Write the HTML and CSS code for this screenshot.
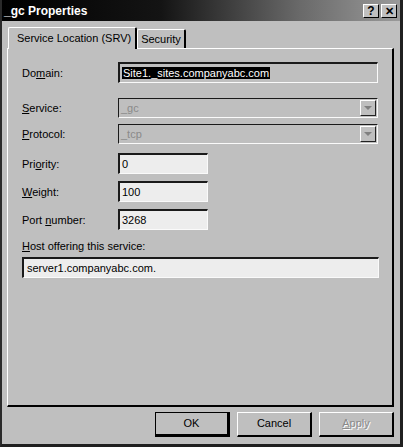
FILE: index.html
```html
<!DOCTYPE html>
<html>
<head>
<meta charset="utf-8">
<link rel="stylesheet" href="styles.css">
</head>
<body>
<div class="window">
  <div class="titlebar">
    <span class="title">_gc Properties</span>
    <div class="tbtns">
      <span class="tbtn">?</span>
      <span class="tbtn x">✕</span>
    </div>
  </div>
  <div class="tabs">
    <div class="tab active">Service Location (SRV)</div>
    <div class="tab">Security</div>
  </div>
  <div class="panel">
    <div class="row r-domain">
      <span class="label">Do<u>m</u>ain:</span>
      <div class="field ro wide"><span class="sel">Site1._sites.companyabc.com</span></div>
    </div>
    <div class="row r-service">
      <span class="label"><u>S</u>ervice:</span>
      <div class="field combo wide"><span class="dis">_gc</span><span class="drop"><span class="arrow"></span></span></div>
    </div>
    <div class="row r-protocol">
      <span class="label"><u>P</u>rotocol:</span>
      <div class="field combo wide"><span class="dis">_tcp</span><span class="drop"><span class="arrow"></span></span></div>
    </div>
    <div class="row r-priority">
      <span class="label">Pri<u>o</u>rity:</span>
      <div class="field num">0</div>
    </div>
    <div class="row r-weight">
      <span class="label"><u>W</u>eight:</span>
      <div class="field num">100</div>
    </div>
    <div class="row r-port">
      <span class="label">Port <u>n</u>umber:</span>
      <div class="field num">3268</div>
    </div>
    <div class="hostlabel"><u>H</u>ost offering this service:</div>
    <div class="field host">server1.companyabc.com.</div>
  </div>
  <div class="buttons">
    <div class="btn default">OK</div>
    <div class="btn">Cancel</div>
    <div class="btn disabled"><u>A</u>pply</div>
  </div>
</div>
</body>
</html>
```

FILE: styles.css
```css
html, body {
  margin: 0;
  padding: 0;
  background: #c0c0c0;
}
body {
  font-family: "Liberation Sans", Arial, sans-serif;
  font-size: 11px;
  color: #000;
}
.window {
  width: 403px;
  height: 447px;
  box-sizing: border-box;
  background: #bfbfbf;
  border-left: 2px solid #2a2a2a;
  border-right: 3px solid #202020;
  border-bottom: 3px solid #202020;
  display: flex;
  flex-direction: column;
}
.titlebar {
  height: 21px;
  background: linear-gradient(to right, #000 0%, #141414 40%, #6a6a6a 75%, #9a9a9a 100%);
  display: flex;
  align-items: center;
  justify-content: space-between;
  padding: 0 3px 0 2px;
}
.title {
  color: #fff;
  font-weight: bold;
  font-size: 12px;
}
.tbtns {
  display: flex;
  gap: 2px;
}
.tbtn {
  width: 16px;
  height: 14px;
  box-sizing: border-box;
  background: #c0c0c0;
  border-top: 1px solid #fff;
  border-left: 1px solid #fff;
  border-right: 1px solid #000;
  border-bottom: 1px solid #000;
  font-weight: bold;
  font-size: 12px;
  line-height: 12px;
  text-align: center;
}
.tbtn.x {
  font-size: 11px;
}
.tabs {
  display: flex;
  align-items: flex-end;
  margin: 6px 0 0 6px;
  height: 21px;
}
.tab {
  box-sizing: border-box;
  border-top: 1px solid #fff;
  border-left: 1px solid #fff;
  border-right: 2px solid #000;
  border-radius: 2px 2px 0 0;
  padding: 0 3px;
  height: 19px;
  line-height: 18px;
  background: #bfbfbf;
}
.tab.active {
  height: 22px;
  padding: 0 4px 0 8px;
  line-height: 20px;
  margin-bottom: -1px;
  position: relative;
  z-index: 1;
}
.panel {
  margin-left: 5px;
  width: 387px;
  height: 359px;
  box-sizing: border-box;
  border-top: 1px solid #fff;
  border-left: 1px solid #fff;
  border-right: 2px solid #000;
  border-bottom: 2px solid #000;
  padding: 13px 0 0 14px;
  display: flex;
  flex-direction: column;
}
.row {
  display: flex;
  align-items: center;
}
.label {
  width: 96px;
  flex: none;
}
.field {
  box-sizing: border-box;
  height: 21px;
  border-top: 2px solid #1a1a1a;
  border-left: 2px solid #1a1a1a;
  border-right: 1px solid #fafafa;
  border-bottom: 1px solid #fafafa;
  background: #ededed;
  padding-left: 2px;
  line-height: 18px;
  white-space: nowrap;
  overflow: hidden;
}
.field.wide {
  width: 260px;
}
.field.ro, .field.combo {
  background: #bfbfbf;
}
.field.combo {
  display: flex;
  justify-content: space-between;
  height: 20px;
  border-top: 1px solid #1a1a1a;
  border-left: 1px solid #1a1a1a;
}
.sel {
  background: #000;
  color: #fff;
  padding: 0 1px;
}
.dis {
  color: #8a8a8a;
}
.drop {
  width: 16px;
  height: 16px;
  margin: 1px;
  box-sizing: border-box;
  border-top: 1px solid #fff;
  border-left: 1px solid #fff;
  border-right: 1px solid #222;
  border-bottom: 1px solid #222;
  display: flex;
  align-items: center;
  justify-content: center;
}
.arrow {
  width: 0;
  height: 0;
  border-left: 4px solid transparent;
  border-right: 4px solid transparent;
  border-top: 4px solid #808080;
}
.field.num {
  width: 90px;
}
.r-service { margin-top: 15px; }
.r-protocol { margin-top: 6px; }
.r-priority { margin-top: 9px; }
.r-weight { margin-top: 7px; }
.r-port { margin-top: 7px; }
.hostlabel {
  margin-top: 10px;
  height: 15px;
}
.field.host {
  margin-top: 2px;
  width: 357px;
  padding-left: 3px;
}
.buttons {
  display: flex;
  justify-content: flex-end;
  gap: 7px;
  margin: 5px 6px 0 0;
}
.btn {
  width: 75px;
  height: 25px;
  box-sizing: border-box;
  border-top: 1px solid #fff;
  border-left: 1px solid #fff;
  border-right: 2px solid #000;
  border-bottom: 2px solid #000;
  text-align: center;
  line-height: 21px;
}
.btn.default {
  outline: 1px solid #000;
  outline-offset: -1px;
  border-right-width: 3px;
  border-bottom-width: 3px;
}
.btn.disabled {
  color: #8a8a8a;
  text-shadow: 1px 1px 0 #fff;
}
```
